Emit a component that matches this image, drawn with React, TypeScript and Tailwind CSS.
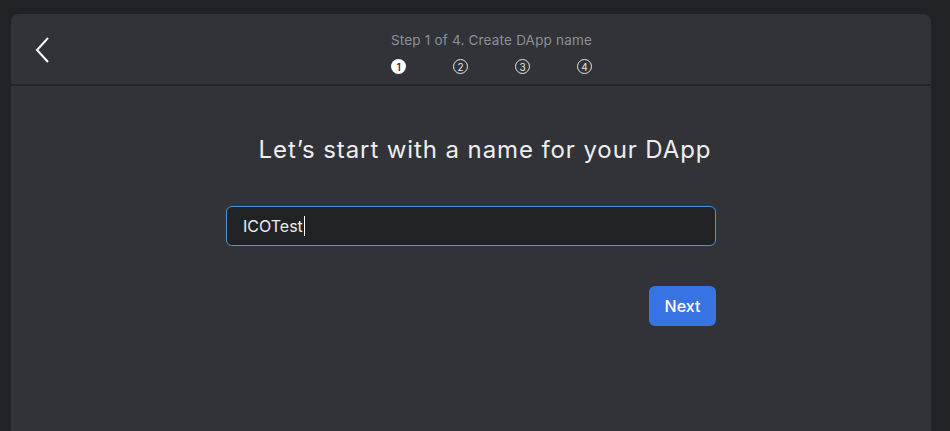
import React from 'react';

const StepDot: React.FC<{ n: number; active?: boolean }> = ({ n, active }) =>
    active ? (
        <span className="flex h-[15px] w-[15px] items-center justify-center rounded-full bg-white text-[10px] font-semibold leading-none text-[#313338]">
            {n}
        </span>
    ) : (
        <span className="flex h-[15px] w-[15px] items-center justify-center rounded-full border border-[#e6e6e6] text-[10px] leading-none text-[#e6e6e6]">
            {n}
        </span>
    );

const App: React.FC = () => {
    return (
        <div className="h-[431px] w-[950px] overflow-hidden bg-[#212225] pl-[11px] pr-[19px] pt-[14px] font-['Inter',sans-serif]">
            <div className="h-[440px] rounded-lg bg-[#313338]">
                {/* Header */}
                <div className="flex h-[72px] border-b-2 border-[#242529]">
                    <button className="flex w-[41px] items-start justify-end pt-[23px]">
                        <svg width="18" height="26" viewBox="0 0 18 26" fill="none" stroke="#ffffff" strokeWidth="2">
                            <path d="M14 1 L3 13 L14 25" />
                        </svg>
                    </button>
                    <div className="flex flex-1 flex-col items-center pt-[17px]">
                        <p className="text-[13.5px] leading-[18px] tracking-[0.2px] text-[#8e9096]">Step 1 of 4. Create DApp name</p>
                        <div className="mt-[10px] flex gap-[47px]">
                            <StepDot n={1} active />
                            <StepDot n={2} />
                            <StepDot n={3} />
                            <StepDot n={4} />
                        </div>
                    </div>
                </div>

                {/* Body */}
                <div className="mx-auto flex w-[490px] flex-col pt-[48px]">
                    <h1 className="-mr-[20px] pl-[8px] text-center text-[24px] leading-[32px] tracking-[0.9px] text-[#eeeeee]">
                        Let’s start with a name for your DApp
                    </h1>
                    <div className="mt-[40px] flex h-[40px] items-center rounded-md border border-[#4b95de] bg-[#212226] px-[16px]">
                        <span className="text-[16px] text-[#ececec]">ICOTest</span>
                        <span className="ml-[1px] h-[20px] w-[1px] bg-white" />
                    </div>
                    <div className="mt-[40px] flex justify-end">
                        <button className="h-[40px] w-[67px] rounded-md bg-[#3873e3] text-[16px] font-medium text-white">
                            Next
                        </button>
                    </div>
                </div>
            </div>
        </div>
    );
};

export default App;
